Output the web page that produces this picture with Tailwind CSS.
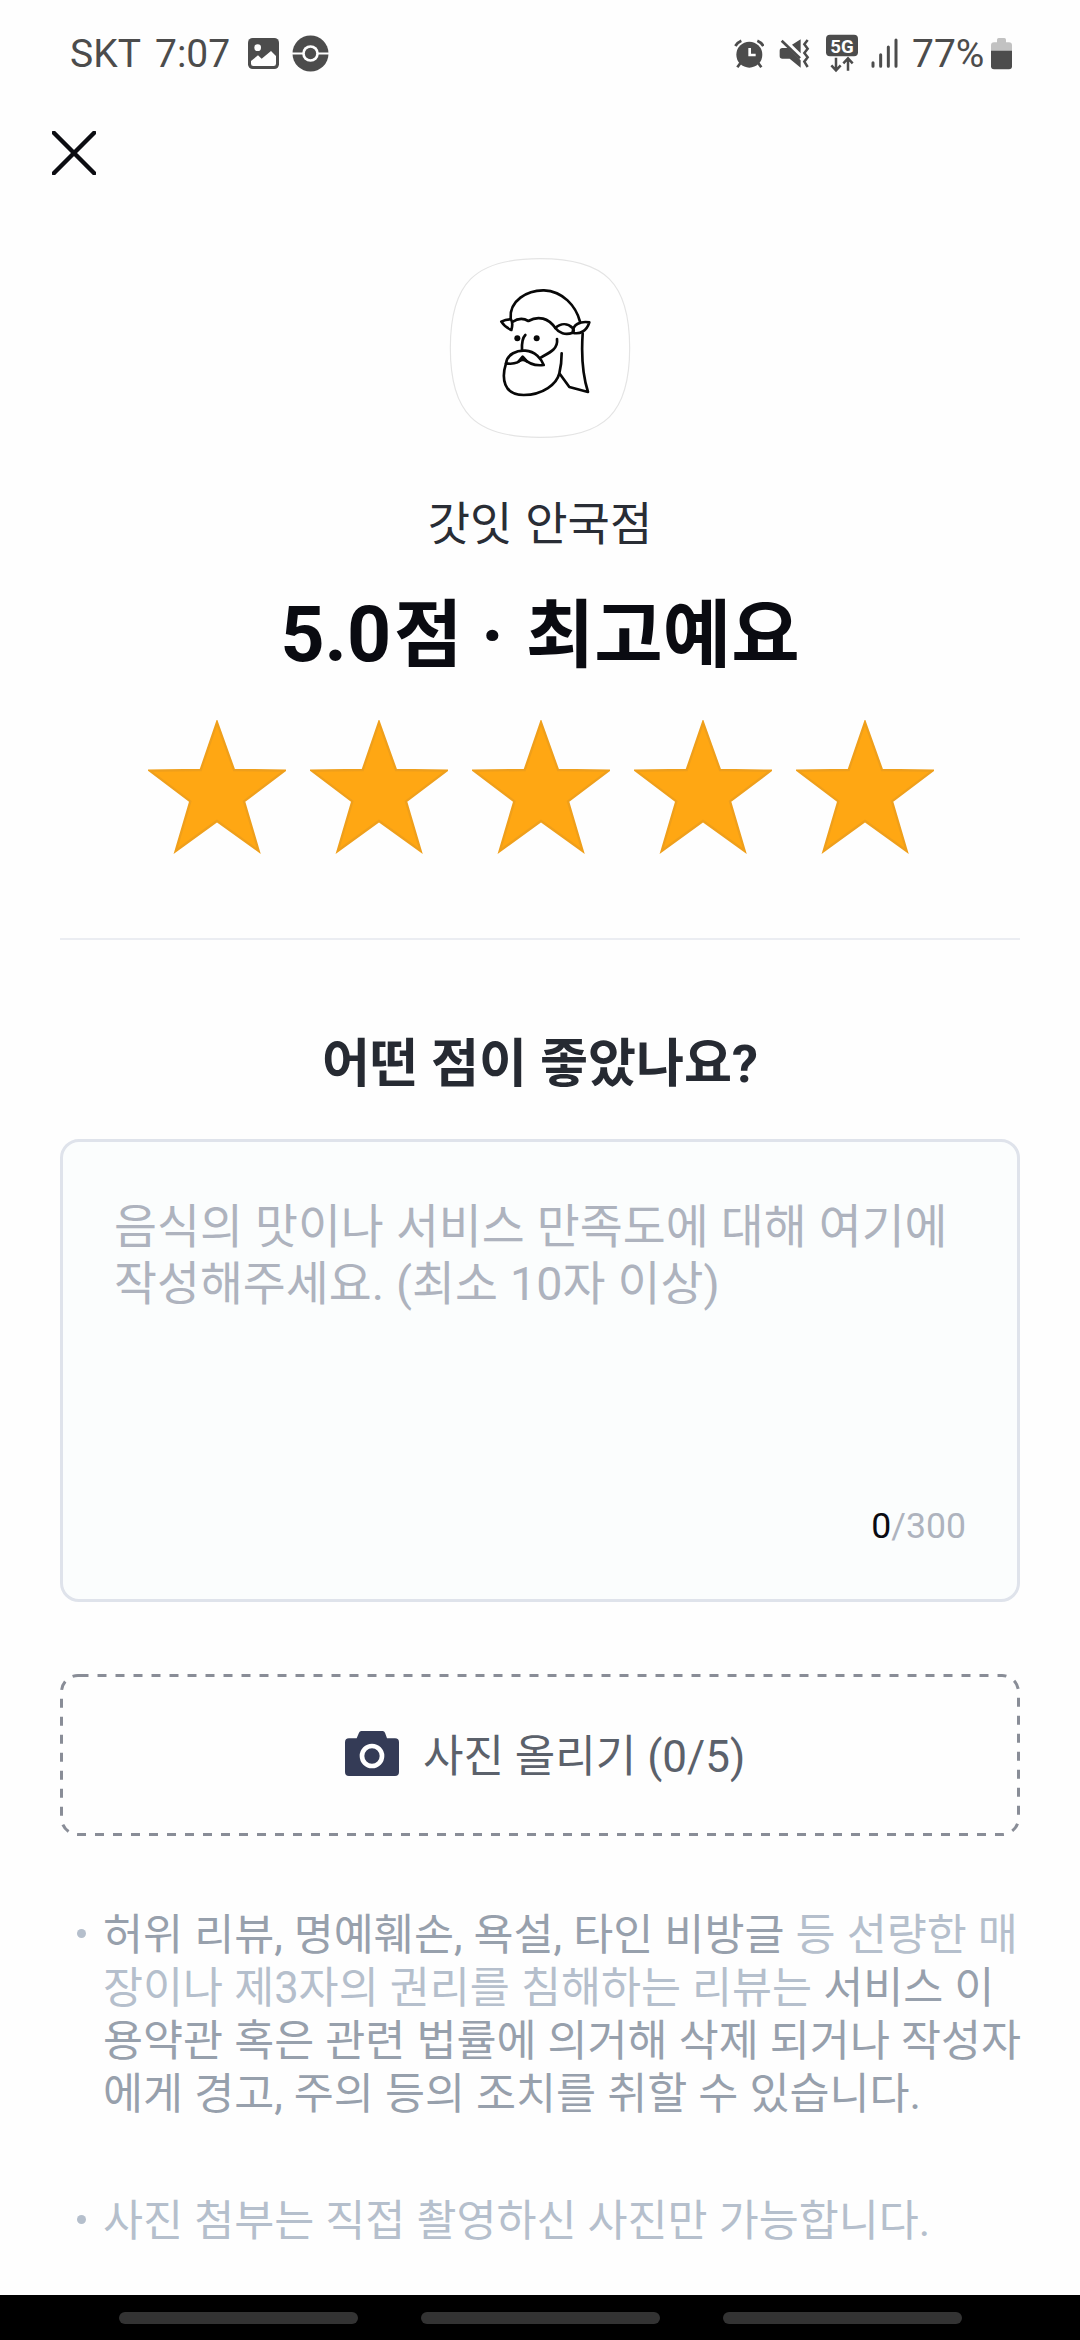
<!DOCTYPE html>
<html lang="ko">
<head>
<meta charset="utf-8">
<title>리뷰 작성</title>
<script src="https://cdn.jsdelivr.net/npm/@tailwindcss/browser@4"></script>
</head>
<body class="bg-white">
<div class="flex h-[2340px] w-[1080px] flex-col overflow-hidden bg-[#fefefe] font-['Roboto','Noto_Sans_CJK_KR',sans-serif] whitespace-nowrap">

  <!-- Status bar -->
  <div class="flex h-[107px] shrink-0 items-center justify-between pr-[68px] pl-[70px] text-[39px] leading-[46px] text-[#4c4c4c]">
    <div class="flex items-center">
      <span class="w-[85px]">SKT</span>
      <span class="w-[93px]">7:07</span>
      <svg class="h-[31px] w-[31px]" viewBox="0 0 93 93"><rect width="93" height="93" rx="14" fill="#4c4c4c"/><circle cx="29" cy="29" r="10" fill="#fefefe"/><path d="M9 69 L30 52 L41 62 L69 39 L84 54 V77 Q84 84 77 84 H16 Q9 84 9 77 Z" fill="#fefefe"/></svg>
      <svg class="ml-[13px] h-[37px] w-[37px]" viewBox="0 0 111 111"><circle cx="55.500" cy="55.500" r="54" fill="#4c4c4c"/><path d="M0 55.500 H111" stroke="#fefefe" stroke-width="6"/><circle cx="55.500" cy="55.500" r="25" fill="#fefefe"/><circle cx="55.500" cy="55.500" r="17" fill="#4c4c4c"/></svg>
    </div>
    <div class="flex items-center">
      <svg class="h-[40px] w-[30px]" viewBox="70 40 90 120" fill="none" stroke="#4c4c4c" stroke-width="8"><circle cx="116" cy="102" r="39" fill="#4c4c4c" stroke="none"/><path d="M74 76 Q80 65 92 60 M140 60 Q152 65 158 76 M90 126 L80 140 M142 126 L152 140"/><path d="M117 82 V103 H135" stroke="#fefefe"/></svg>
      <svg class="ml-[15px] h-[40px] w-[31px]" viewBox="205 40 93 120"><path d="M213 60 L268 113" stroke="#4c4c4c" stroke-width="8"/><path d="M215 82 H232 L270 119 V141 L237 114 H215 Q207 114 207 106 V90 Q207 82 215 82 Z M244 72 L270 56 V98 Z" fill="#4c4c4c"/><path d="M291 58 L281 71 L291 84 L281 97 L291 110 L281 123 L291 139" fill="none" stroke="#4c4c4c" stroke-width="7.500"/></svg>
      <svg class="ml-[15px] h-[40px] w-[34px]" viewBox="342 36 102 120"><rect x="345" y="38" width="96" height="65" rx="12" fill="#4c4c4c"/><text x="393" y="92" text-anchor="middle" font-size="56" font-weight="700" fill="#fefefe">5G</text><path d="M375 107 V142 M361 130 L375 145 L389 130 M411 146 V112 M397 124 L411 109 L425 124" fill="none" stroke="#4c4c4c" stroke-width="7.500"/></svg>
      <svg class="ml-[11px] h-[40px] w-[29px]" viewBox="477 40 87 120" stroke="#4c4c4c" stroke-width="9" stroke-linecap="round"><path d="M486 126 V137 M509 102 V137 M532 79 V137 M555 58 V137"/></svg>
      <span class="ml-[13px] w-[79px]">77%</span>
      <svg class="h-[40px] w-[21px]" viewBox="840 40 63 120"><path d="M840 92 V74 Q840 65 849 65 H858 V57 Q858 52 863 52 H880 Q885 52 885 57 V65 H894 Q903 65 903 74 V92 Z" fill="#c2c2c2"/><path d="M840 90 H903 V137 Q903 146 894 146 H849 Q840 146 840 137 Z" fill="#4c4c4c"/></svg>
    </div>
  </div>

  <!-- Close button -->
  <div class="h-[143px] shrink-0 pt-6 pl-[52px]">
    <svg class="h-11 w-11" viewBox="0 0 44 44" stroke="#0c0d12" stroke-width="4.400" stroke-linecap="round"><path d="M1.800 1.800 L42.200 42.200 M42.200 1.800 L1.800 42.200"/></svg>
  </div>

  <!-- Store summary -->
  <div class="flex shrink-0 flex-col items-center">
    <svg class="h-[200px] w-[200px]" viewBox="0 0 600 600" fill="none" stroke="#080808" stroke-width="8" stroke-linecap="round" stroke-linejoin="round">
      <path d="M300 26 C495 26 569 99 569 294 C569 489 495 562 300 562 C105 562 31 489 31 294 C31 99 105 26 300 26 Z" fill="#fff" stroke="#e4e4e4" stroke-width="3.500"/>
      <path d="M212 206 C207 152 262 120 312 121 C368 123 408 168 420 215"/>
      <path d="M184 215 Q198 207 213 208 C219 218 217 230 214 240 Q194 231 184 215 Z"/>
      <path d="M217 216 Q242 199 265 213 C295 196 325 204 346 234"/>
      <path d="M346 234 C362 220 382 218 398 234 Q404 242 398 248 C376 257 356 248 346 234 Z"/>
      <path d="M398 248 C398 222 422 213 448 217 C440 243 420 254 398 248 Z"/>
      <circle cx="232" cy="265" r="9" fill="#080808" stroke="none"/><circle cx="290" cy="265" r="9" fill="#080808" stroke="none"/>
      <path d="M256 255 C246 265 245 282 246 301"/>
      <path d="M198 340 C201 312 232 300 256 302 C286 304 304 326 311 345 C286 348 264 340 248 324 C236 340 216 343 198 340 Z"/>
      <path d="M236 334 L248 320 L261 334 Q248 326 236 334 Z" fill="#080808"/>
      <path d="M351 267 C355 297 329 308 303 322"/>
      <path d="M198 340 C184 384 190 435 251 435 C310 434 350 402 358 370 L388 411 L444 426 C427 372 424 310 428 251 M365 310 Q365 342 358 370"/>
    </svg>
    <p class="mt-[44px] text-[46px] leading-[60px] text-[#292d35] [word-spacing:1.5px]">갓잇 안국점</p>
    <h1 class="mt-[31px] flex h-[100px] items-baseline text-[76px] leading-[100px] font-bold text-[#0a0b11]"><span class="mr-[3px] text-[77px]">5.0</span><span class="text-[74.4px] whitespace-pre">점 </span><span class="whitespace-pre">· </span><span class="ml-[3px] text-[74.4px]">최고예요</span></h1>
    <div class="mt-[35px] flex gap-6 pl-[2px]">
      <svg class="h-[134px] w-[138px]" viewBox="54 60 414 402"><path id="star" d="M261 67 L312 210 L464 212 L342 304 L386 453 L261 363 L137 453 L181 304 L59 212 L212 210 Z" fill="#ffa713" stroke="#ef9f1b" stroke-width="7"/></svg>
      <svg class="h-[134px] w-[138px]" viewBox="54 60 414 402"><use href="#star"/></svg>
      <svg class="h-[134px] w-[138px]" viewBox="54 60 414 402"><use href="#star"/></svg>
      <svg class="h-[134px] w-[138px]" viewBox="54 60 414 402"><use href="#star"/></svg>
      <svg class="h-[134px] w-[138px]" viewBox="54 60 414 402"><use href="#star"/></svg>
    </div>
  </div>

  <div class="mx-[60px] mt-[84px] h-[2px] shrink-0 bg-[#ebedf2]"></div>

  <!-- Review form -->
  <h2 class="mt-[90px] shrink-0 text-center text-[52.2px] leading-[70px] font-bold text-[#262a32]">어떤 점이 좋았나요?</h2>
  <div class="mx-[60px] mt-[39px] flex h-[463px] shrink-0 flex-col justify-between rounded-[19px] border-[3px] border-[#dfe3eb] bg-[#fbfdfd] pt-[57px] pr-[51px] pb-[53px] pl-[51px] text-[#aeb3be]">
    <p class="text-[46.7px] leading-[57px] [word-spacing:0.5px]">음식의 맛이나 서비스 만족도에 대해 여기에<br>작성해주세요. (최소 10자 이상)</p>
    <p class="text-right text-[35.6px] leading-10"><span class="text-[#0a0b11]">0</span>/300</p>
  </div>
  <div class="relative mx-[60px] mt-[72px] flex h-[162px] shrink-0 items-center pl-[285px]">
    <svg class="absolute inset-0 h-[162px] w-[960px]" viewBox="0 0 960 162" fill="none"><path d="M19.500 1.500 H942 A16.500 16.500 0 0 1 958.500 18 V144 A16.500 16.500 0 0 1 942 160.500 H18 A16.500 16.500 0 0 1 1.500 144 V18 A16.500 16.500 0 0 1 18 1.500 H19.500" stroke="#898d97" stroke-width="3" stroke-dasharray="9 9"/></svg>
    <svg class="mb-[3px] h-[45px] w-[54px]" viewBox="45 62 162 135"><path d="M57 84 H80 L87 67 Q89 62 94 62 H158 Q163 62 165 67 L171 84 H195 Q207 84 207 96 V185 Q207 197 195 197 H57 Q45 197 45 185 V96 Q45 84 57 84 Z" fill="#343b56"/><circle cx="126" cy="137" r="30" stroke="#fff" stroke-width="14" fill="#343b56"/></svg>
    <span class="mt-[3px] ml-[24px] text-[44px] leading-[60px] text-[#5b616b]">사진 올리기 (0/5)</span>
  </div>

  <!-- Notices -->
  <ul class="mt-[73px] shrink-0 pl-[77px] text-[43.5px] leading-[53px] text-[#b5bfcc] [word-spacing:0.3px]">
    <li class="flex"><i class="mt-[20px] mr-[17px] h-[9px] w-[9px] rounded-full bg-[#b5bfcc]"></i><p><span class="text-[#97a0ac]">허위 리뷰, 명예훼손, 욕설, 타인 비방글</span> 등 선량한 매<br>장이나 제3자의 권리를 침해하는 리뷰는 <span class="text-[#97a0ac]">서비스 이<br>용약관 혹은 관련 법률에 의거해 삭제 되거나 작성자<br>에게 경고, 주의 등의 조치를 취할 수 있습니다.</span></p></li>
    <li class="mt-[74px] flex"><i class="mt-[20px] mr-[17px] h-[9px] w-[9px] rounded-full bg-[#b5bfcc]"></i><p>사진 첨부는 직접 촬영하신 사진만 가능합니다.</p></li>
  </ul>

  <!-- Navigation bar -->
  <div class="mt-auto flex h-[45px] shrink-0 justify-center gap-[63px] bg-black pt-[17px]">
    <div class="h-3 w-[239px] rounded-full bg-[#333]"></div>
    <div class="h-3 w-[239px] rounded-full bg-[#333]"></div>
    <div class="h-3 w-[239px] rounded-full bg-[#333]"></div>
  </div>
</div>
</body>
</html>
